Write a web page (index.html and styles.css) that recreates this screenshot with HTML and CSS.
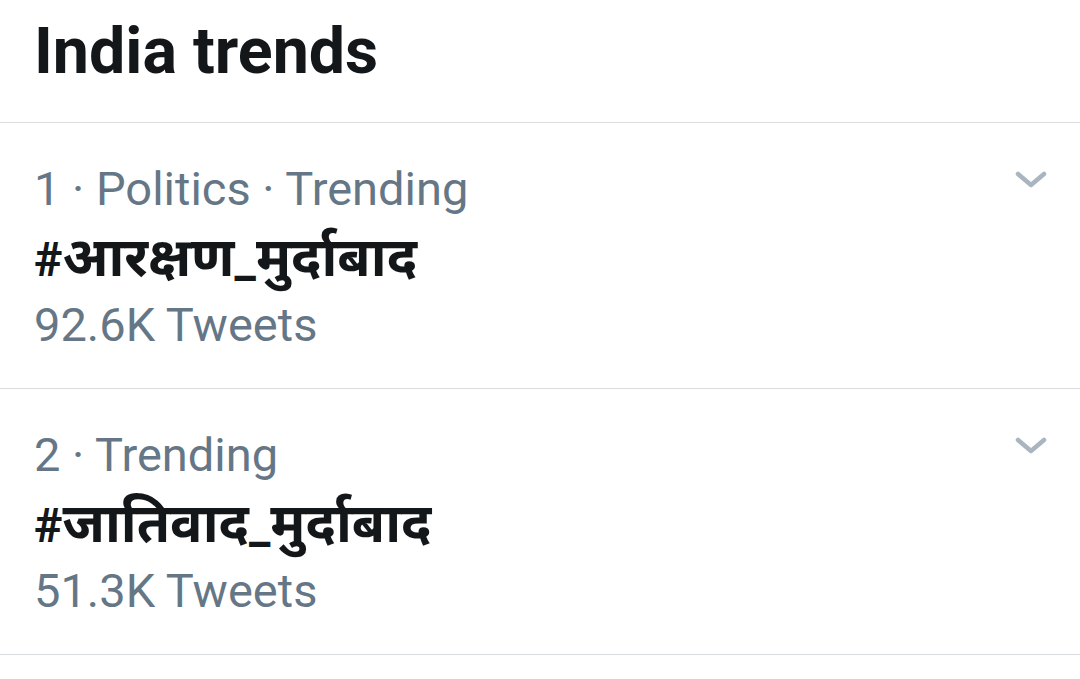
FILE: index.html
```html
<!DOCTYPE html>
<html>
<head>
<meta charset="utf-8">
<link rel="stylesheet" href="styles.css">
</head>
<body>
<div class="page">
  <header class="header"><h1 class="title">India trends</h1></header>
  <div class="trend">
    <div class="lines">
      <div class="meta">1 · Politics · Trending</div>
      <div class="tag">#<span class="dev">आरक्षण</span>_<span class="dev">मुर्दाबाद</span></div>
      <div class="meta">92.6K Tweets</div>
    </div>
    <svg class="chev" width="34" height="22" viewBox="0 0 34 22"><path d="M4 5 L17 16 L30 5" fill="none" stroke="#aab5bf" stroke-width="4.5" stroke-linecap="round" stroke-linejoin="round"/></svg>
  </div>
  <div class="trend">
    <div class="lines">
      <div class="meta">2 · Trending</div>
      <div class="tag">#<span class="dev">जातिवाद</span>_<span class="dev">मुर्दाबाद</span></div>
      <div class="meta">51.3K Tweets</div>
    </div>
    <svg class="chev" width="34" height="22" viewBox="0 0 34 22"><path d="M4 5 L17 16 L30 5" fill="none" stroke="#aab5bf" stroke-width="4.5" stroke-linecap="round" stroke-linejoin="round"/></svg>
  </div>
</div>
</body>
</html>
```
FILE: styles.css
```css
html, body {
  margin: 0;
  padding: 0;
  background: #ffffff;
}
.page {
  width: 1080px;
  font-family: Roboto, "Noto Sans Devanagari", "Noto Sans", sans-serif;
}
.header {
  box-sizing: border-box;
  height: 123px;
  padding: 11px 0 0 34px;
  border-bottom: 1px solid #d9dcdf;
}
.title {
  margin: 0;
  font-size: 64.5px;
  line-height: 80px;
  font-weight: 700;
  color: #14171a;
}
.trend {
  display: flex;
  justify-content: space-between;
  align-items: flex-start;
  box-sizing: border-box;
  height: 266px;
  padding: 32px 32px 0 34px;
  border-bottom: 1px solid #d9dcdf;
}
.lines {
  display: flex;
  flex-direction: column;
}
.meta {
  height: 68px;
  font-size: 47px;
  line-height: 68px;
  color: #657786;
}
.tag {
  height: 68px;
  font-size: 48px;
  line-height: 70px;
  font-weight: 700;
  color: #14171a;
}
.dev {
  font-size: 54px;
  line-height: 70px;
}
.chev {
  margin-top: 14px;
}
```
